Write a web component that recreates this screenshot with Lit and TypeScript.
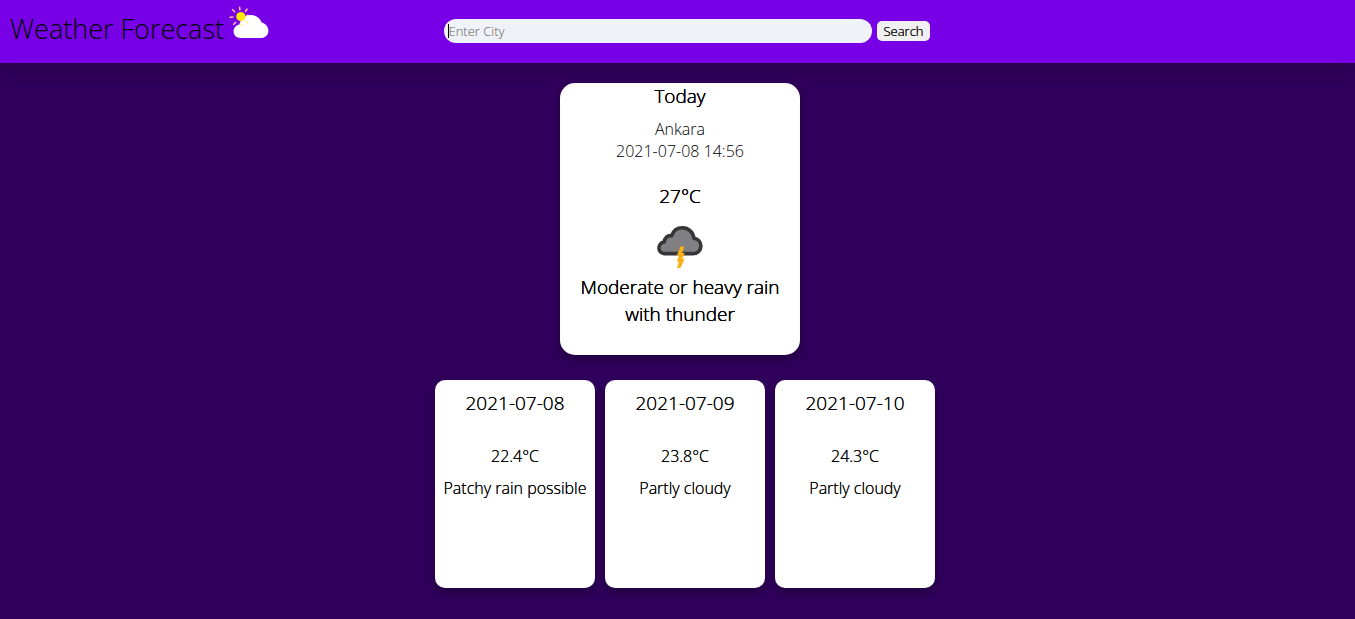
import { LitElement, html, css, svg } from "lit";
import { customElement, property, query } from "lit/decorators.js";

interface Day {
  date: string;
  temp: string;
  text: string;
}

const sunCloud = svg`
  <g stroke="#ffb3a0" stroke-width="1.6" stroke-linecap="round">
    <path d="M10.6 2.2 10.9 4.8M18 4.2 16.4 6.4M3.6 4.7 5.6 6.8M1.2 12.4 3.8 12M4.8 19.3 6.6 17.4M19 10.3 17.6 10.8" />
  </g>
  <path fill="#fff" d="M11.5 33C7.6 33 4.6 30.5 4.6 26.8C4.6 23.1 6.9 20.3 10.4 19.6C11.5 14.2 16 10 21.7 10C27 10 31 13 32.7 17.4C36.6 18.4 39.4 21.6 39.4 25.7C39.4 30 36.2 33 32 33Z" />
  <circle cx="11.8" cy="11.6" r="4.6" fill="#ffec00" />
  <path stroke="#fff27a" stroke-width="1.4" stroke-linecap="round" d="M12.4 19.2 12.8 20.6M17.4 16.8 18.8 18" />
`;

const thunder = svg`
  <path fill="#808083" stroke="#363638" stroke-width="3.6" stroke-linejoin="round"
    d="M16.5 38.6C13.3 38.6 10.9 36.2 10.9 33.1C10.9 29.8 13.2 27.3 16.4 26.9C16.3 22.9 19.6 20 23.7 20.7C25.2 16 29.2 12.8 34.3 12.8C40.6 12.8 45.4 17.3 45.9 23.3C49.8 23.8 52.9 26.9 52.9 31C52.9 35.3 49.6 38.6 45.2 38.6Z" />
  <path fill="#fbb016" d="M32.6 31.5 36.2 31.5 34.2 38 36.8 38 34.2 43.8 36.6 43.8 32.4 53 29 53 31 46.6 28.8 46.6 31 40.6 28.8 40.6Z" />
`;

@customElement("search-bar")
export class SearchBar extends LitElement {
  @query("input") field!: HTMLInputElement;

  static styles = css`
    :host { display: block; }
    .form { display: flex; align-items: center; gap: 5px; }
    .box { position: relative; display: flex; }
    .caret {
      position: absolute;
      left: 4px;
      top: 5px;
      width: 1px;
      height: 14px;
      background: #000;
      pointer-events: none;
    }
    .field {
      box-sizing: border-box;
      width: 428px;
      max-width: 50vw;
      height: 24px;
      padding: 0 4px;
      border: 0;
      border-radius: 12px;
      outline: 0;
      background: #eff2f6;
      color: #000;
      caret-color: transparent;
      font: 300 13px/18px "Open Sans", sans-serif;
    }
    .field::placeholder { color: #606060; opacity: 1; }
    .button {
      height: 20px;
      padding: 0 6px;
      border: 0;
      border-radius: 5px;
      background: #f0f0f0;
      color: #000;
      font: 300 13px/20px "Open Sans", sans-serif;
      text-shadow: 0 0 0 #000;
    }
  `;

  firstUpdated() {
    this.field.focus();
  }

  render() {
    return html`
      <form class="form" @submit=${(e: Event) => e.preventDefault()}>
        <span class="box">
          <input class="field" type="text" placeholder="Enter City" aria-label="Enter City" />
          <span class="caret"></span>
        </span>
        <button class="button" type="submit">Search</button>
      </form>
    `;
  }
}

@customElement("day-card")
export class DayCard extends LitElement {
  @property({ attribute: false }) day!: Day;

  static styles = css`
    :host { display: block; }
    .card {
      box-sizing: border-box;
      min-height: 208px;
      padding: 10px 4px;
      border-radius: 10px;
      background: #fff;
      box-shadow: 0 5px 10px rgba(0, 0, 0, 0.3);
      text-align: center;
      font-weight: 300;
      text-shadow: 0 0 0 #000;
    }
    .date { margin: 0 0 28px; font-size: 19px; line-height: 27px; font-weight: 300; }
    .line { margin: 0 0 10px; font-size: 16px; line-height: 22px; }
  `;

  render() {
    return html`
      <article class="card">
        <h3 class="date">${this.day.date}</h3>
        <p class="line">${this.day.temp}</p>
        <p class="line">${this.day.text}</p>
      </article>
    `;
  }
}

@customElement("app-root")
export class AppRoot extends LitElement {
  days: Day[] = [
    { date: "2021-07-08", temp: "22.4°C", text: "Patchy rain possible" },
    { date: "2021-07-09", temp: "23.8°C", text: "Partly cloudy" },
    { date: "2021-07-10", temp: "24.3°C", text: "Partly cloudy" },
  ];

  static styles = css`
    :host {
      display: block;
      min-height: 100vh;
      background: #30005c;
      color: #000;
      font-family: "Open Sans", sans-serif;
    }
    .header {
      display: grid;
      grid-template-columns: 1fr auto 1fr;
      box-sizing: border-box;
      min-height: 63px;
      padding-bottom: 1px;
      background: #7700e6;
      box-shadow: 0 5px 20px rgba(0, 0, 0, 0.2);
    }
    .brand { display: flex; align-items: flex-start; gap: 5px; padding: 5px 0 0 10px; }
    .title { margin: 0; padding-top: 5px; font-size: 27px; line-height: 38px; font-weight: 300; white-space: nowrap; }
    .logo { width: 40px; height: 40px; flex: none; }
    .search { align-self: center; margin-left: 19px; }
    .main { display: flex; flex-direction: column; align-items: center; gap: 25px; padding: 20px 0 31px; }
    .today {
      box-sizing: border-box;
      width: 240px;
      margin-left: 5px;
      padding: 0 10px 27px;
      border-radius: 15px;
      background: #fff;
      box-shadow: 0 5px 10px rgba(0, 0, 0, 0.3);
      text-align: center;
    }
    .big {
      margin: 0;
      font-size: 19px;
      line-height: 27px;
      font-weight: 300;
      text-shadow: 0 0 0 #000, 0 0 0 #000;
    }
    .place { margin: 8px 0 21px; font-size: 16px; line-height: 22px; font-weight: 300; }
    .icon { display: block; width: 64px; height: 59px; margin: 5px auto 0; }
    .days {
      display: grid;
      grid-template-columns: repeat(3, 160px);
      gap: 10px;
      margin-left: 15px;
    }
  `;

  render() {
    return html`
      <header class="header">
        <div class="brand">
          <h1 class="title">Weather Forecast</h1>
          <svg class="logo" viewBox="0 0 40 40" aria-hidden="true">${sunCloud}</svg>
        </div>
        <search-bar class="search"></search-bar>
      </header>
      <main class="main">
        <section class="today">
          <h2 class="big">Today</h2>
          <p class="place">Ankara<br />2021-07-08 14:56</p>
          <p class="big">27°C</p>
          <svg class="icon" viewBox="0 0 64 59" aria-hidden="true">${thunder}</svg>
          <p class="big">Moderate or heavy rain with thunder</p>
        </section>
        <div class="days">
          ${this.days.map((day) => html`<day-card .day=${day}></day-card>`)}
        </div>
      </main>
    `;
  }
}
